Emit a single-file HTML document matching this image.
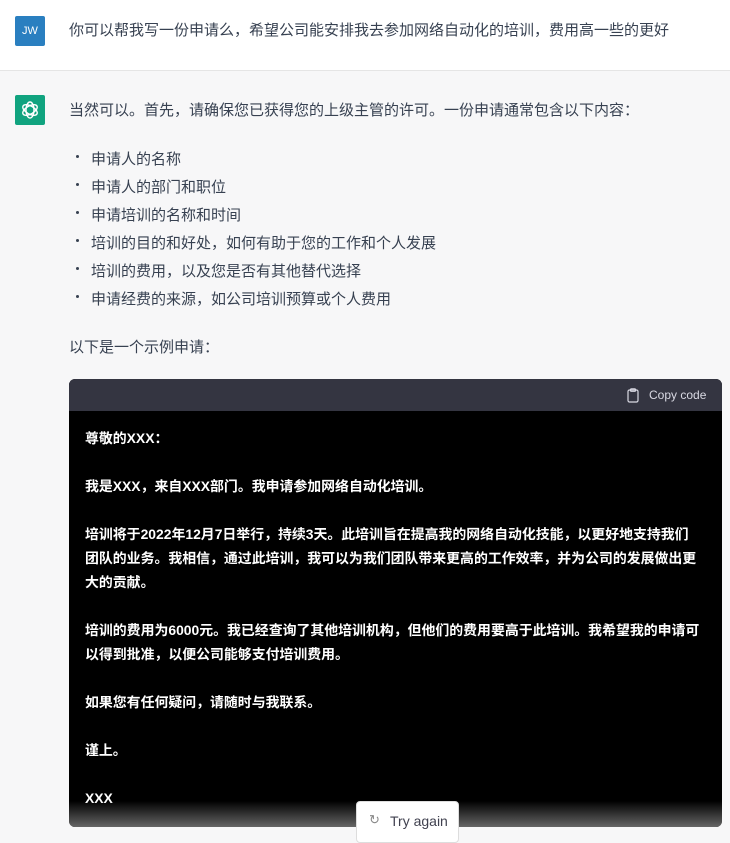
<!DOCTYPE html>
<html><head><meta charset="utf-8"><style>
body{margin:0;width:730px;height:835px;overflow:hidden;background:#f7f7f8;font-family:"Liberation Sans","Noto Sans CJK SC",sans-serif;color:#374151;position:relative}
.top{position:absolute;left:0;top:0;width:730px;height:70px;background:#fff;border-bottom:1px solid #e5e5e5}
.av{position:absolute;left:15px;width:30px;height:30px;border-radius:2px}
.t{position:absolute;font-size:15px;white-space:nowrap}
.b{position:absolute;left:76px;width:3px;height:3px;border-radius:50%;background:#374151}
.code{position:absolute;left:69px;top:379px;width:653px;height:448px;background:#000;border-radius:6px;overflow:hidden}
.hd{height:32px;background:#343541;color:#d9d9e3;font-size:12px;position:relative}
.pre{color:#fff;font-size:13.9px;font-weight:bold;line-height:24px;padding:15px 10px 12px 16px;white-space:pre;}
.fade{position:absolute;left:0;bottom:0;width:100%;height:26px;background:linear-gradient(rgba(0,0,0,0),#666)}
.btn{position:absolute;left:356px;top:801px;width:101px;height:40px;background:#fff;border:1px solid #ddd;border-radius:4px;font-size:14px;color:#40414f}
</style></head><body>
<div class="top"></div>
<div class="av" style="top:16px;background:#2a7fc0;color:#fff;font-size:11px;text-align:center;line-height:30px">JW</div>
<div class="t" style="left:69px;top:19px">你可以帮我写一份申请么，希望公司能安排我去参加网络自动化的培训，费用高一些的更好</div>
<div class="av" style="top:95px;background:#10a37f">
<svg width="30" height="30" viewBox="0 0 30 30" fill="none" stroke="#fff" stroke-width="1.4"><g transform="translate(15 15)"><ellipse rx="4" ry="8" transform="rotate(0)"/><ellipse rx="4" ry="8" transform="rotate(60)"/><ellipse rx="4" ry="8" transform="rotate(120)"/></g></svg></div>
<div class="t" style="left:69px;top:99px">当然可以。首先，请确保您已获得您的上级主管的许可。一份申请通常包含以下内容：</div>
<div class="b" style="top:155px"></div><div class="t" style="left:91px;top:148px">申请人的名称</div>
<div class="b" style="top:183px"></div><div class="t" style="left:91px;top:176px">申请人的部门和职位</div>
<div class="b" style="top:211px"></div><div class="t" style="left:91px;top:204px">申请培训的名称和时间</div>
<div class="b" style="top:239px"></div><div class="t" style="left:91px;top:232px">培训的目的和好处，如何有助于您的工作和个人发展</div>
<div class="b" style="top:267px"></div><div class="t" style="left:91px;top:260px">培训的费用，以及您是否有其他替代选择</div>
<div class="b" style="top:295px"></div><div class="t" style="left:91px;top:288px">申请经费的来源，如公司培训预算或个人费用</div>
<div class="t" style="left:69px;top:336px">以下是一个示例申请：</div>
<div class="code"><div class="hd"><svg style="position:absolute;left:558px;top:9px" width="12" height="15" viewBox="0 0 12 15" fill="none" stroke="#d9d9e3" stroke-width="1.2"><rect x="1" y="2" width="10" height="12" rx="1.5"/><rect x="3.5" y="0.8" width="5" height="2.5" rx="0.8"/></svg><span style="position:absolute;left:580px;top:9px">Copy code</span></div>
<div class="pre">尊敬的XXX：

我是XXX，来自XXX部门。我申请参加网络自动化培训。

培训将于2022年12月7日举行，持续3天。此培训旨在提高我的网络自动化技能，以更好地支持我们
团队的业务。我相信，通过此培训，我可以为我们团队带来更高的工作效率，并为公司的发展做出更
大的贡献。

培训的费用为6000元。我已经查询了其他培训机构，但他们的费用要高于此培训。我希望我的申请可
以得到批准，以便公司能够支付培训费用。

如果您有任何疑问，请随时与我联系。

谨上。

XXX</div><div class="fade"></div></div>
<div class="btn"><span style="position:absolute;left:12px;top:10px;font-size:13px;color:#888">↻</span><span style="position:absolute;left:33px;top:11px">Try again</span></div>
</body></html>
